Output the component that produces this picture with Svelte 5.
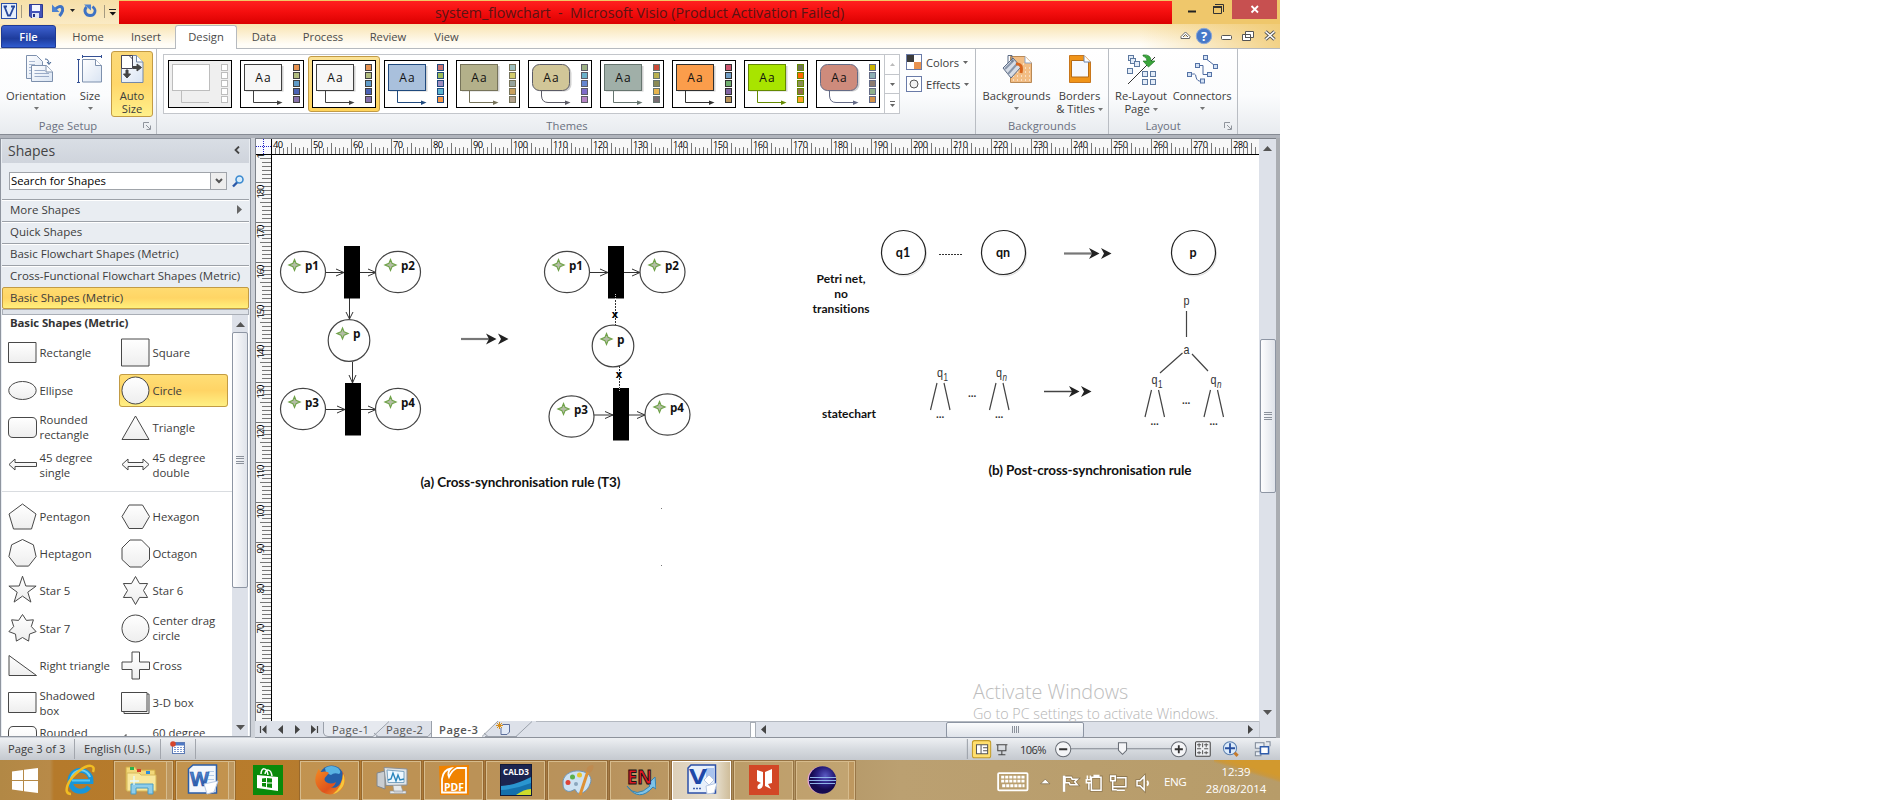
<script>
  const tabs = [
    ['Home', 58], ['Insert', 58], ['Design', 62], ['Data', 54],
    ['Process', 64], ['Review', 66], ['View', 51]
  ];

  const std = ['#e8924f', '#b1bd7f', '#5f9bc8', '#4a62b4', '#8570ab'];
  const themes = [
    { none: true, fill: '#fff', line: '#bdbdbd', sw: ['#fff', '#fff', '#fff', '#fff', '#fff'] },
    { fill: '#f7f7f7', line: '#404040', sw: std },
    { fill: '#f7f7f7', line: '#404040', sw: std, on: true },
    { fill: '#a9c0dc', line: '#1f497d', sw: ['#c9706f', '#9bbb59', '#9d8cbf', '#5bb4cf', '#f79646'] },
    { fill: '#b3b08a', line: '#76735a', sw: ['#9cbebd', '#d2cb6c', '#95a39d', '#c89f5d', '#b1a089'] },
    { fill: '#d1c698', line: '#5b5b66', sw: ['#9cb084', '#6bb1c9', '#6585cf', '#7e6bc9', '#b583c3'], r: 7 },
    { fill: '#a0afa8', line: '#66756f', sw: ['#cc4b38', '#b8b04e', '#8a8a55', '#e8b54d', '#786c71'] },
    { fill: '#fb9d4b', line: '#30302f', sw: ['#ce5570', '#6f9dc4', '#6fae6f', '#8064a2', '#b8935a'] },
    { fill: '#a8e400', line: '#648a00', sw: ['#6e7057', '#ff6700', '#8b8d55', '#916b4c', '#ff9f25'] },
    { fill: '#ce8b7c', line: '#646b86', sw: ['#ccb400', '#8caeb2', '#8c7b70', '#8fb08c', '#d19049'], r: 7 }
  ];

  const stencils = ['Quick Shapes', 'Basic Flowchart Shapes (Metric)', 'Cross-Functional Flowchart Shapes (Metric)'];

  const poly = (n, r = 14, a0 = -90, inner = 0) => {
    const pts = [];
    const k = inner ? n * 2 : n;
    for (let i = 0; i < k; i++) {
      const a = ((a0 + (360 / k) * i) * Math.PI) / 180;
      const q = inner && i % 2 ? inner : r;
      pts.push(`${(14.5 + q * Math.cos(a)).toFixed(1)},${(14.5 + q * Math.sin(a)).toFixed(1)}`);
    }
    return `M${pts.join('L')}Z`;
  };
  const box = 'M.5 4.5H28V24.5H.5Z';
  const rbox = 'M5 4.5H24Q28.5 4.5 28.5 9V20Q28.5 24.5 24 24.5H5Q.5 24.5 .5 20V9Q.5 4.5 5 4.5Z';
  const circ = 'M14.5 1A13.5 13.5 0 1 1 14.4 1Z';
  const groupA = [
    ['Rectangle', box], ['Square', 'M.5 1H28V28H.5Z'],
    ['Ellipse', 'M14.5 5.5A13.7 9 0 1 1 14.4 5.5Z'], ['Circle', circ],
    ['Rounded\nrectangle', rbox], ['Triangle', 'M14.5 3L28 26.5H1Z'],
    ['45 degree\nsingle', 'M1 14.5L7 9V12.5H28.5V16.5H7V20Z'],
    ['45 degree\ndouble', 'M1 14.5L7 9V12.5H22V9L28 14.5L22 20V16.5H7V20Z']
  ];
  const groupB = [
    ['Pentagon', 'M14.5 2L28 12L23.5 27H5.5L1 12Z'], ['Hexagon', 'M1 14.5L8 3H21.5L28.5 14.5L21.5 26.5H8Z'],
    ['Heptagon', poly(7)], ['Octagon', 'M9 1H20.5L28.5 9V20.5L20.5 28H9L1 20.5V9Z'],
    ['Star 5', poly(5, 14.3, -90, 5.6)], ['Star 6', poly(6, 14, -90, 8)],
    ['Star 7', poly(7, 14, -90, 9)], ['Center drag\ncircle', circ],
    ['Right triangle', 'M1 4.5V24.5H28.5Z'],
    ['Cross', 'M11 1H18.5V11H28.5V18.5H18.5V28H11V18.5H1V11H11Z'],
    ['Shadowed\nbox', box], ['3-D box', 'M.5 4.5H26V23.5H.5Z M26 6H28V25.5H3V23.5'],
    ['Rounded\n ', 'M5 .5H24Q28.500 .5 28.500 6V28H.5V6Q.5 .5 5 .5Z'], ['60 degree\n ', 'M1 13L5 8.500V13']
  ];

  const hTicks = Array.from({ length: 247 }, (_, i) => i);
  const hLabels = Array.from({ length: 25 }, (_, i) => i);
  const vTicks = Array.from({ length: 142 }, (_, i) => i);
  const vLabels = Array.from({ length: 15 }, (_, i) => i);

  const places = [
    [303, 272, 22.5, 20.7, 'p1', 305, 270], [398, 272, 22.5, 20.7, 'p2', 401, 270],
    [349, 340.5, 20.8, 20.8, 'p', 353, 338.5],
    [303, 409, 22.5, 20.7, 'p3', 305, 407], [398, 409, 22.5, 20.7, 'p4', 401, 407],
    [567, 272, 22.5, 20.7, 'p1', 569, 270], [662.5, 272, 22.5, 20.7, 'p2', 665, 270],
    [613, 346, 20.8, 20.8, 'p', 617, 344],
    [571.5, 416.5, 22.5, 20.7, 'p3', 574, 414], [667.5, 414.5, 22.5, 20.7, 'p4', 670, 412]
  ];
  const bars = [[344, 246], [345, 383], [608, 246], [613, 388]];
  const hArrows = [
    [326, 344, 272.5], [360, 376, 272.5], [326, 345, 409.5], [361, 376, 409.5],
    [590, 608, 272.5], [624, 640, 272.5], [594, 613, 415], [629, 645, 415]
  ];
  const rewrites = [[461, 339], [1064, 253.5], [1044, 391.5]];
  const forks = [[938, 383], [997, 383], [1152.5, 390], [1211.5, 390]];
</script>

{#snippet caret()}<svg class="caret" width="5" height="3" viewBox="0 0 5 3"><path d="M0 0H5L2.5 3Z" fill="#666" /></svg>{/snippet}
{#snippet launcher()}<svg class="launch" width="8" height="8" viewBox="0 0 8 8"><path d="M.5 6V.5H6M3 3L7 7M7.5 3.5V7.5H3.5" fill="none" stroke="#8f949c" /></svg>{/snippet}
{#snippet shapeGrid(list)}
  <div class="grid">
    {#each list as [name, d]}
      <div class="shape" class:hot={name === 'Circle'}>
        <svg width="29" height="29" viewBox="0 0 29 29"><path {d} fill="url(#shapeFill)" stroke="#484848" /></svg>
        <span>{name}</span>
      </div>
    {/each}
  </div>
{/snippet}

<div class="window">
  <svg class="defs" width="0" height="0">
    <defs>
      <linearGradient id="shapeFill" x1="0" y1="0" x2="0" y2="1"><stop offset="0" stop-color="#fff" /><stop offset="1" stop-color="#eee" /></linearGradient>
      <linearGradient id="page" x1="0" y1="0" x2="1" y2="1"><stop offset="0" stop-color="#fff" /><stop offset="1" stop-color="#d9e4f3" /></linearGradient>
      <linearGradient id="blue" x1="0" y1="0" x2="0" y2="1"><stop offset="0" stop-color="#5f9be0" /><stop offset="1" stop-color="#1d4c9f" /></linearGradient>
      <linearGradient id="fox" x1="0" y1="0" x2="1" y2="1"><stop offset="0" stop-color="#f28a22" /><stop offset=".6" stop-color="#e0531c" /><stop offset="1" stop-color="#f0a02a" /></linearGradient>
      <radialGradient id="orb" cx=".6" cy=".35"><stop offset="0" stop-color="#5b5bc4" /><stop offset=".6" stop-color="#2a2080" /><stop offset="1" stop-color="#150a50" /></radialGradient>
    </defs>
  </svg>

  <header class="titlebar">
    <svg class="quick" width="119" height="24" viewBox="0 0 119 24">
      <rect x="1.5" y="3.5" width="15" height="15" fill="#e6effb" stroke="#2a4fa8" />
      <path d="M4.500 6.500L8 15.500H10L14 6.500M3.500 6.500H7M11 6.500H15" fill="none" stroke="#27489c" stroke-width="1.800" />
      <path d="M21.500 5V18M104.500 5V18" stroke="#a59a80" />
      <path d="M29.500 4.500H42.500V17.500H31L29.500 16Z" fill="#4353b8" stroke="#2d3990" />
      <rect x="32" y="5" width="8" height="6" fill="#f4f6ff" /><rect x="32" y="13" width="7" height="5" fill="#dfe3f5" /><rect x="33" y="14" width="2" height="3" fill="#222f7d" />
      <path d="M55 9.500C61 3 66 8 59.500 16" fill="none" stroke="#3e72c4" stroke-width="3" /><path d="M52 4.500V12H59.500Z" fill="#4d82d0" />
      <path d="M70 9H75L72.500 12Z" fill="#222" />
      <path d="M86.500 7C83 11 86 15.500 90 15.500C95 15.500 97 10 92.500 6.500" fill="none" stroke="#3e72c4" stroke-width="2.800" /><path d="M84 4.500H91V10.500Z" fill="#4d82d0" />
      <path d="M109 9.500H116" stroke="#222" /><path d="M109.500 12H116L112.800 15.500Z" fill="#111" />
    </svg>
    <div class="red"><span>system_flowchart&nbsp; -&nbsp; Microsoft Visio (Product Activation Failed)</span></div>
    <svg class="winbtn" width="108" height="24" viewBox="0 0 108 24">
      <path d="M16 11.500H24" stroke="#222" stroke-width="2" />
      <path d="M41.500 6.500H49.500V13.500H41.500ZM43 4.500H51.500V12" fill="none" stroke="#333" /><path d="M41 7H50" stroke="#333" stroke-width="2" />
      <rect x="60" y="0" width="45" height="19" fill="#c75050" />
      <path d="M79.500 6L86 12.500M86 6L79.500 12.500" stroke="#fff" stroke-width="1.800" />
    </svg>
  </header>

  <nav class="tabs">
    <div class="file">File</div>
    {#each tabs as [name, w]}
      <div class="tab" class:active={name === 'Design'} style:width="{w}px">{name}</div>
    {/each}
    <svg class="tabtools" width="104" height="24" viewBox="0 0 104 24">
      <path d="M5 14.500H13.500L14 12.500L9.500 8L5 12.500ZM7 13L9.500 10.500L12 13" fill="#fff" stroke="#666" />
      <circle cx="28" cy="12" r="7.700" fill="#4678c8" stroke="#8aa8d8" />
      <text x="28" y="17" text-anchor="middle" font-size="13" font-weight="700" fill="#fff">?</text>
      <rect x="45.500" y="11.500" width="10" height="4" rx="1" fill="#fff" stroke="#555" />
      <path d="M69.500 7.500H77.500V13.500H69.500ZM66.500 10.500H74.500V16.500H66.500Z" fill="#fff" stroke="#555" /><path d="M69 13.500H72" stroke="#555" />
      <path d="M89.500 7.500L98.500 15.500M98.500 7.500L89.500 15.500" stroke="#555" stroke-width="3.500" /><path d="M89.500 7.500L98.500 15.500M98.500 7.500L89.500 15.500" stroke="#fff" stroke-width="1.500" />
    </svg>
  </nav>

  <section class="ribbon">
    <div class="group setup">
      <div class="tools">
        <div class="tool orient">
          <svg width="34" height="30" viewBox="0 0 34 30">
            <path d="M7.500 1.500H17.500L23.500 7.500V24.500H7.500Z" fill="url(#page)" stroke="#7d90ad" /><path d="M10 7.500H16M10 10.500H16M10 13.500H16M10 16.500H16M10 19.500H16" stroke="#a9b9d2" />
            <path d="M12.500 11.500H27.500L33.500 18V27.500H12.500Z" fill="url(#page)" stroke="#7d90ad" /><path d="M15.500 16.500H26M15.500 19.500H30M15.500 22.500H30" stroke="#9aabc8" /><path d="M27 11.500V18H33.500" fill="#fff" stroke="#7d90ad" /><path d="M26 5Q30 5 30 10M28 8L30 10.500L32 8" fill="none" stroke="#3e608f" />
          </svg>
          <span>Orientation</span>{@render caret()}
        </div>
        <div class="tool size">
          <svg width="30" height="30" viewBox="0 0 30 30">
            <path d="M7.500 5.500H20.500L26.500 11.500V28H7.500Z" fill="url(#page)" stroke="#7d90ad" /><path d="M20.500 5.500V11.500H26.500" fill="#fff" stroke="#7d90ad" />
            <path d="M7 2.500H26M7.500 1V4M26.500 1V4M3.500 5V28M2 5.500H5M2 28.500H5" stroke="#334f93" />
          </svg>
          <span>Size</span>{@render caret()}
        </div>
        <div class="tool auto">
          <svg width="30" height="30" viewBox="0 0 30 30">
            <path d="M4.500 1.500H19.500L26 8V28.500H4.500Z" fill="url(#page)" stroke="#7488a8" /><path d="M19.500 1.500V8H26" fill="#fff" stroke="#7488a8" />
            <path d="M4.500 1.500H15.500V14.500H4.500Z" fill="#fff" stroke="#445" /><path d="M12 1.500L15.500 5" stroke="#445" />
            <path d="M16 12.500H20V10L24.500 13.500L20 17V14.500H16ZM9 16V20H6.500L10 24L13.500 20H11V16Z" fill="#444" stroke="#444" />
          </svg>
          <span>Auto<br />Size</span>
        </div>
      </div>
      <div class="caption">Page Setup{@render launcher()}</div>
    </div>

    <div class="group themes">
      <div class="themerow">
        <div class="gallery">
          {#each themes as t}
            <div class="thumb" class:on={t.on}>
              <svg width="64" height="48" viewBox="0 0 64 48">
                <rect x=".5" y=".5" width="63" height="47" fill={t.none ? '#efefef' : '#fff'} stroke="#000" />
                {#if !t.none}<rect x="6" y="6" width="37.500" height="25.500" rx={t.r ?? 0} fill="#999" opacity=".45" />{/if}
                <rect x="4.500" y="4.500" width="37" height="26" rx={t.r ?? 0} fill={t.fill} stroke={t.line} />
                <path d={t.r ? 'M13.500 31V36Q14 42.500 20 42.500H41' : 'M13.500 31V42.500H41'} fill="none" stroke={t.line} />
                {#if !t.none}
                  <path d="M37 40.500L42.500 42.500L37 45Z" fill={t.line} />
                  <text class="aa" x="23" y="22" text-anchor="middle" textLength="15.500">Aa</text>
                {/if}
                {#each t.sw as c, i}<rect x="53.500" y={4.5 + i * 8} width="6" height="6" fill={c} stroke={t.line} />{/each}
              </svg>
            </div>
          {/each}
          <div class="spin">
            <i><svg width="5" height="3"><path d="M0 3H5L2.500 0Z" fill="#bbb" /></svg></i>
            <i><svg width="5" height="3"><path d="M0 0H5L2.500 3Z" fill="#666" /></svg></i>
            <i><svg width="5" height="6"><path d="M0 .500H5" stroke="#666" /><path d="M0 3H5L2.500 6Z" fill="#666" /></svg></i>
          </div>
        </div>
        <div class="opts">
          <div><svg width="16" height="16"><rect x=".5" y=".5" width="15" height="15" fill="#fff" stroke="#6a7ba8" /><rect x="1" y="1" width="7" height="7" fill="#3b3b3b" /><rect x="8" y="8" width="7" height="7" fill="#e8924f" /></svg>Colors{@render caret()}</div>
          <div><svg width="16" height="16"><rect x=".5" y=".5" width="15" height="15" fill="#fff" stroke="#6a7ba8" /><circle cx="8" cy="8" r="4" fill="#f2f2f2" stroke="#555" /></svg>Effects{@render caret()}</div>
        </div>
      </div>
      <div class="caption">Themes</div>
    </div>

    <div class="group bgs">
      <div class="tools">
        <div class="tool backs">
          <svg width="32" height="30" viewBox="0 0 32 30">
            <path d="M9.500 2.500H24L30.500 9V28.500H9.500Z" fill="#f2bd84" stroke="#b98955" /><path d="M12 14H29M12 18H29M12 22H29M12 26H29M14 10H26" stroke="#fff" stroke-dasharray="1 3" /><path d="M24 2.500V9H30.500" fill="#fff" stroke="#8fa3c2" />
            <path d="M2 14L12 4L20 13L10 24Z" fill="#d6dce6" stroke="#5a6a84" /><path d="M4 15L13 6M7 20L16 10" stroke="#8996ab" stroke-width="2" /><path d="M7 9V1.500H11V8" fill="none" stroke="#5a6a84" /><path d="M15 10Q22 9 20 19" fill="none" stroke="#d8641c" stroke-width="3" />
          </svg>
          <span>Backgrounds</span>{@render caret()}
        </div>
        <div class="tool borders">
          <svg width="26" height="30" viewBox="0 0 26 30">
            <path d="M2.500 1.500H17L23.500 8V28.500H2.500Z" fill="#f09418" stroke="#c8761b" /><path d="M4.500 6.500H21.500V23H4.500Z" fill="#f7f9fd" stroke="#b56a14" /><path d="M17 1.500V8H23.500" fill="#fff" stroke="#6983ae" />
          </svg>
          <span>Borders<br />&amp; Titles {@render caret()}</span>
        </div>
      </div>
      <div class="caption">Backgrounds</div>
    </div>

    <div class="group layout">
      <div class="tools">
        <div class="tool relay">
          <svg width="32" height="32" viewBox="0 0 32 32">
            <g fill="#e3ecf8" stroke="#5c789f"><rect x="3.500" y="1.500" width="5" height="5" /><rect x="5.500" y="4.500" width="5" height="5" /><rect x="9.500" y="7.500" width="5" height="5" /><rect x="2.500" y="14.500" width="5" height="5" /><rect x="17.500" y="17.500" width="5" height="5" /><rect x="25.500" y="17.500" width="5" height="5" /><rect x="17.500" y="25.500" width="5" height="5" /><rect x="25.500" y="25.500" width="5" height="5" /></g>
            <path d="M3 30L30 3" stroke="#333" /><path d="M18 1Q26 0 26 7H30L23.500 13L18 7H22Q22 3 18 2Z" fill="#3aa53a" stroke="#1f7a26" stroke-width=".7" />
          </svg>
          <span>Re-Layout<br />Page {@render caret()}</span>
        </div>
        <div class="tool conn">
          <svg width="34" height="30" viewBox="0 0 34 30">
            <path d="M20 4L29 11M12 11.500H18V20.500H24M5 21Q11 18 11 23Q12 28 17 27" fill="none" stroke="#4d6aa0" />
            <g fill="#d4e2f5" stroke="#5573a6"><rect x="18.500" y="1.500" width="4" height="4" /><rect x="28.500" y="10.500" width="4" height="4" /><rect x="10.500" y="9.500" width="4" height="4" /><rect x="22.500" y="18.500" width="4" height="4" /><rect x="2.500" y="18.500" width="4" height="4" /><rect x="15.500" y="25" width="4" height="4" /></g>
          </svg>
          <span>Connectors</span>{@render caret()}
        </div>
      </div>
      <div class="caption">Layout{@render launcher()}</div>
    </div>
  </section>

  <main class="work">
    <aside class="panel">
      <div class="phead"><span>Shapes</span><svg width="6" height="8"><path d="M5 .5L1.500 4L5 7.500" fill="none" stroke="#444" stroke-width="1.800" /></svg></div>
      <div class="search">
        <div class="field"><span>Search for Shapes</span><i><svg width="8" height="6"><path d="M1 1L4 4L7 1" fill="none" stroke="#555" stroke-width="2" /></svg></i></div>
        <svg width="12" height="13" viewBox="0 0 12 13"><circle cx="7.500" cy="4.500" r="3.500" fill="#d8ecfb" stroke="#3d8bd0" stroke-width="1.600" /><path d="M5 7.500L1 11.500" stroke="#2a58a8" stroke-width="2.400" /></svg>
      </div>
      <div class="row">More Shapes<svg width="5" height="9"><path d="M0 0V9L5 4.500Z" fill="#666" /></svg></div>
      {#each stencils as s}<div class="row">{s}</div>{/each}
      <div class="row sel">Basic Shapes (Metric)</div>
      <div class="splitter"></div>
      <div class="stencil">
        <div class="list">
          <h3>Basic Shapes (Metric)</h3>
          {@render shapeGrid(groupA)}
          <hr />
          {@render shapeGrid(groupB)}
        </div>
        <div class="vbar left">
          <svg width="9" height="5"><path d="M0 5H9L4.500 0Z" fill="#555" /></svg>
          <div class="thumbbar"><b></b></div>
          <svg width="9" height="5"><path d="M0 0H9L4.500 5Z" fill="#555" /></svg>
        </div>
      </div>
    </aside>

    <div class="doc">
      <div class="drawing">
        <svg width="1004" height="582" viewBox="255 139 1004 582">
          <rect x="255" y="139" width="1004" height="582" fill="#fff" />
          <rect x="272" y="139" width="987" height="15" fill="#f7f7f7" />
          {#each hTicks as i}
            <rect x={271 + i * 4} y={i % 10 === 0 ? 139 : i % 5 === 0 ? 143 : i % 2 ? 148 : 147} width="1" height={i % 10 === 0 ? 15 : i % 5 === 0 ? 11 : i % 2 ? 6 : 7} fill="#777" />
          {/each}
          {#each hLabels as i}<text class="rl" x={273 + i * 40} y="147.500" textLength={i < 6 ? 10 : 15}>{40 + i * 10}</text>{/each}
          <rect x="256" y="155" width="15" height="566" fill="#f7f7f7" />
          {#each vTicks as i}
            <rect x={i % 10 === 4 ? 256 : i % 10 === 9 ? 260 : 262} y={158 + i * 4 + 8} width={i % 10 === 4 ? 15 : i % 10 === 9 ? 11 : 9} height="1" fill="#777" />
          {/each}
          <rect x="260" y="158" width="11" height="1" fill="#777" /><rect x="262" y="162" width="9" height="1" fill="#777" />
          {#each vLabels as i}<text class="rl" transform="translate(264 {(i < 10 ? 158.5 : 153.5) + i * 40}) rotate(-90)" textLength={i < 10 ? 14 : 10}>{190 - i * 10}</text>{/each}
          <rect x="256" y="139" width="15" height="15" fill="#fafaff" /><path d="M256 146.500H271M263.500 139V154" stroke="#2222cc" stroke-dasharray="1 1" />
          <path d="M271.500 139V721M256 154.500H1259" stroke="#000" />
          <path d="M255.500 139V721" stroke="#7d828a" />

          <g fill="none" stroke="#333">
            {#each hArrows as [a, b, y]}<path d="M{a} {y}H{b}M{b - 8} {y - 3.5}L{b} {y}L{b - 8} {y + 3.5}" />{/each}
            <path d="M349.500 298V319M346 312L349.500 319L353 312M352.500 362V383M349 375L352.500 383L356 375" />
            <path d="M615.500 294V325M619.500 366V392" stroke-dasharray="2 1" />
          </g>
          {#each bars as [x, y]}<rect {x} {y} width="16" height="52.500" fill="#000" />{/each}
          <path d="M615.500 294V299M619.500 388V392" stroke="#ccc" stroke-dasharray="1 1" />
          {#each places as [cx, cy, rx, ry, label, tx, ty]}
            <ellipse {cx} {cy} {rx} {ry} fill="#fff" stroke="#444" stroke-width="1.200" />
            <path d="M{tx - 10.500} {ty - 10.500}l1.600 3.900l3.900 1.600l-3.900 1.600l-1.600 3.900l-1.600 -3.900l-3.900 -1.600l3.900 -1.600Z" fill="#b4bda6" stroke="#70a34a" stroke-width="1.200" />
            <text class="pl" x={tx} y={ty - 0.5} textLength={label.length > 1 ? 14 : 7.5} lengthAdjust="spacingAndGlyphs">{label}</text>
          {/each}
          <text class="xx" x="615" y="318">x</text><text class="xx" x="619" y="378">x</text>

          {#each rewrites as [x, y], i}
            <path d="M{x} {y}H{x + 28}" stroke={i === 2 ? '#444' : '#777'} stroke-width={i === 2 ? 1.5 : 2.2} />
            <path d="M{x + 25} {y - 5.5}L{x + 35.500} {y}L{x + 25} {y + 5.5}L{x + 28} {y}ZM{x + 37} {y - 5.5}L{x + 47.500} {y}L{x + 37} {y + 5.5}L{x + 40} {y}Z" fill="#222" />
          {/each}

          {#each [[903.500, 'q1'], [1003.500, 'qn'], [1193.500, 'p']] as [x, l]}
            <circle cx={x + 1} cy="254" r="22" fill="none" stroke="#ddd" />
            <circle cx={x} cy="252.500" r="22" fill="#fff" stroke="#222" stroke-width="1.200" />
            <text class="cb" x={x - 0.5} y="256.500" font-size="12.500">{l}</text>
          {/each}
          <path d="M939 254.500H963" stroke="#333" stroke-dasharray="2 1" />

          <text class="cb" x="841" y="282.500" font-size="12" textLength="49">Petri net,</text>
          <text class="cb" x="841" y="298" font-size="12">no</text>
          <text class="cb" x="841" y="313" font-size="12" textLength="57">transitions</text>
          <text class="cb" x="849" y="418" font-size="12" textLength="54">statechart</text>
          <text class="cb" x="520.500" y="487" font-size="13.500" textLength="200">(a) Cross-synchronisation rule (T3)</text>
          <text class="cb" x="1090" y="474.500" font-size="13.500" textLength="203">(b) Post-cross-synchronisation rule</text>

          <g stroke="#444" fill="none" stroke-width="1.200">
            <path d="M1186.500 311V337M1182.500 353L1160 373M1192 354L1208 371" />
            {#each forks as [x, y]}<path d="M{x - 1} {y}L{x - 7.500} {y + 27}M{x + 6} {y}L{x + 12} {y + 27}" />{/each}
          </g>
          <g class="tree">
            <text x="1183.500" y="304.500" textLength="6" lengthAdjust="spacingAndGlyphs">p</text>
            <text x="1183.500" y="353.500" textLength="6" lengthAdjust="spacingAndGlyphs">a</text>
            {#each forks as [x, y], i}
              <text x={x - 1} y={y - 6.5} textLength="6" lengthAdjust="spacingAndGlyphs">q</text>
              <text x={x + 5.5} y={y - 2} font-size="10" textLength="4.500" lengthAdjust="spacingAndGlyphs" font-style={i % 2 ? 'italic' : 'normal'}>{i % 2 ? 'n' : '1'}</text>
              <text class="dots" x={x - 2} y={y + 35}>...</text>
            {/each}
            <text class="dots" x="968" y="397">...</text><text class="dots" x="1182" y="404">...</text>
          </g>
          <path d="M661 508.500H662M661 565.500H662" stroke="#777" />
        </svg>
        <div class="vbar right">
          <svg width="9" height="5"><path d="M0 5H9L4.500 0Z" fill="#555" /></svg>
          <div class="thumbbar"><b></b></div>
          <svg width="9" height="5"><path d="M0 0H9L4.500 5Z" fill="#555" /></svg>
        </div>
      </div>
      <div class="hrow">
        <svg width="281" height="17" viewBox="255 721 281 17">
          <path d="M323 721V735Q324 737 328 737H374L390 721Z" fill="#e6e9ef" />
          <path d="M323.500 722V733Q324 736.500 328 736.500H373L389 721.500M376 736.500H428L431 733M374 733L378 736.500M485 736.500H516L532 721.500" fill="none" stroke="#9aa0aa" />
          <path d="M431.500 721V737H482L498 721Z" fill="#fff" /><path d="M431.500 721V737M482 736.500L498 721M484 733L488 736.500H517" fill="none" stroke="#9aa0aa" />
          <path d="M260.500 726V733M317.500 726V733" stroke="#444" stroke-width="1.200" /><path d="M266.500 725V734L262 729.500ZM283 725V734L278 729.500ZM295 725V734L300 729.500ZM311 725V734L316 729.500Z" fill="#444" />
          <text x="332" y="734" textLength="37">Page-1</text><text x="386" y="734" textLength="37">Page-2</text><text x="439" y="734" font-weight="600" textLength="39">Page-3</text>
          <path d="M502.500 724.500H509.500V732L507 734.500H501V728" fill="#e2eaf7" stroke="#5d6f9b" /><path d="M499.500 722V729M496 725.500H503M497 723L502 728M502 723L497 728" stroke="#d78f1b" />
        </svg>
        <div class="hbar">
          <span class="grip"></span>
          <svg class="la" width="5" height="9"><path d="M5 0V9L0 4.500Z" fill="#444" /></svg>
          <div class="hthumb"></div>
          <svg class="ra" width="5" height="9"><path d="M0 0V9L5 4.500Z" fill="#444" /></svg>
        </div>
        <div class="corner"></div>
      </div>
    </div>
    <div class="edge"></div>
    <div class="watermark"><p>Activate Windows</p><small>Go to PC settings to activate Windows.</small></div>
  </main>

  <footer class="status">
    <span class="s1">Page 3 of 3</span><span class="s2">English (U.S.)</span>
    <span class="s3"><svg width="16" height="14"><rect x="2.500" y="1.500" width="12" height="11" fill="#fff" stroke="#5d7bb5" /><rect x="3" y="2" width="11" height="2.500" fill="#4d78c4" /><path d="M4 6.500H14M4 8.500H14M4 10.500H14" stroke="#7f9bd0" stroke-dasharray="2 1" /><circle cx="3" cy="3" r="2.800" fill="#d5452b" /></svg></span>
    <svg class="zoom" width="317" height="20" viewBox="960.2 738.9 312.6 19.72">
      <path d="M964.500 738V760" stroke="#9aa0a8" /><rect x="969.500" y="740.500" width="18" height="17" rx="2" fill="#ffdf6e" stroke="#c29b29" />
      <path d="M973.500 744.500H984.500V753.500H973.500ZM978 744V754M980 747.500H984M980 750.500H984" fill="#fff" stroke="#555" />
      <path d="M993 744.500H1004M994.500 745V750.500H1002.500V745M998.500 751V754M995 754.500H1002" fill="none" stroke="#444" />
      <text x="1016.500" y="753.500" textLength="26" fill="#333">106%</text>
      <path d="M1066 748.500H1166" stroke="#858a92" />
      <g fill="#f4f5f7" stroke="#666b73"><circle cx="1059" cy="749" r="7.500" /><circle cx="1173" cy="749" r="7.500" /><path d="M1113.500 742.500H1121.500V750L1117.500 754L1113.500 750Z" /></g>
      <path d="M1055 749H1063M1169 749H1177M1173 745V753" stroke="#333" stroke-width="1.800" />
      <rect x="1189.500" y="741.500" width="14.500" height="14.500" rx="1" fill="#eef0f3" stroke="#444" /><path d="M1196.500 743V747M1196.500 750V754M1191 748.500H1195M1198 748.500H1202M1193 743V747M1191 744.500H1195M1200 743V747M1198 744.500H1202M1193 751V754M1191 752.500H1195M1200 751V754M1198 752.500H1202" stroke="#555" />
      <circle cx="1223.500" cy="748" r="6.500" fill="#dcebfa" stroke="#5a7fae" /><path d="M1218.500 748H1228.500M1223.500 743V753" stroke="#2850a0" stroke-width="1.800" /><path d="M1228 752.500L1231 755.500" stroke="#c67a2a" stroke-width="3" />
      <path d="M1248.500 742.500H1257V748H1248.500ZM1259 741.500H1263V746M1248.500 751.500H1254V755.500H1248.500Z" fill="#e8edf4" stroke="#7c8795" /><path d="M1253.500 746.500H1261.500V753.500H1253.500Z" fill="#fff" stroke="#2f5cab" stroke-width="1.500" />
    </svg>
  </footer>

  <div class="taskbar">
    <div class="cell start"><svg width="28" height="27" viewBox="0 0 28 27"><path d="M1 4.500L12 3V13H1ZM13 2.800L27 1V13H13ZM1 14H12V24L1 22.500ZM13 14H27V26L13 24.200Z" fill="#fff" /></svg></div>
    <div class="cell ie"><svg width="32" height="32" viewBox="0 0 32 32">
      <path d="M7 17.500H26A10.500 10.500 0 1 0 24 23" fill="none" stroke="#1996d8" stroke-width="5" /><path d="M6 14Q8 7 16 6Q23 7 25 13" fill="none" stroke="#6fd0f5" stroke-width="2" /><path d="M7 16.500H25" stroke="#58c6f2" stroke-width="2" /><path d="M6 30C-3 30 3 15 14 7C23 0 31 0 28 8" fill="none" stroke="#f2bd22" stroke-width="2.500" />
    </svg></div>
    <div class="cell btn multi"><svg width="32" height="32" viewBox="0 0 32 32">
      <path d="M1 3H10L12 6H30V26H1Z" fill="#f2d879" stroke="#cda944" /><path d="M2 9H14L16 11H31V27H2Z" fill="#f8e79c" stroke="#d7b95a" /><rect x="5" y="3" width="4" height="3" fill="#2cb14c" /><rect x="12" y="5" width="4" height="3" fill="#d33d28" /><rect x="21" y="7" width="4" height="3" fill="#2c8edb" />
      <path d="M6 30V20H28V30H23V24H11V30Z" fill="#8ecdea" stroke="#4b9cc4" /><path d="M9 12V21M5 17H14" stroke="#e7faff" stroke-width="1.300" />
    </svg></div>
    <div class="cell btn multi word"><svg width="32" height="32" viewBox="0 0 32 32">
      <path d="M6 1H29.500V29H1.500V5Z" fill="#f3f7fd" stroke="#2b5ea8" stroke-width="1.500" /><path d="M21 7.500H27M21 11.500H27M21 15.500H27" stroke="#b5cbe8" /><text x="3" y="22" font-size="20" font-weight="700" fill="url(#blue)" stroke="#1d4c9f" stroke-width=".6" textLength="19" lengthAdjust="spacingAndGlyphs">W</text><path d="M17 20L31 17L27 28L20 30Z" fill="#fff" stroke="#b8c8e2" />
    </svg></div>
    <div class="cell store"><svg width="30" height="30" viewBox="0 0 30 30"><rect width="30" height="30" fill="#0a8a0a" /><path d="M4 10L25 12V26L4 23Z" fill="#fff" /><path d="M8 9C8 2 14 2 15 10M12 9C13 3 18 4 19 11" fill="none" stroke="#fff" stroke-width="1.500" /><path d="M9 13.500L13 13V17H9ZM14 13L19 13.500V17.500H14ZM9 18H13V22L9 21.300ZM14 18.500H19V23L14 22.300Z" fill="#0a8a0a" /></svg></div>
    <div class="cell btn"><svg width="32" height="32" viewBox="0 0 32 32">
      <circle cx="17.500" cy="14" r="12.500" fill="#2460a8" /><path d="M11 4Q17 0 24 4Q28 8 25 10Q20 8 17 11L12 9Z" fill="#59b3e2" /><path d="M2 11L4.500 5L7 8Q13 6.500 15 9L12 12.500Q9 15 12 18Q17 21 22 18Q20 24 16 23Q23 26 27 18Q30 11 27.500 5Q34 16 28 25Q18 34 8 28Q-1 21 2 11Z" fill="url(#fox)" /><path d="M29 9Q33 18 27 25Q23 29.500 19 30Q29 22 29 9Z" fill="#f8c63a" />
    </svg></div>
    <div class="cell btn"><svg width="32" height="32" viewBox="0 0 32 32">
      <path d="M1 9L9 7V25L1 22Z" fill="#c9cdd1" stroke="#80868c" /><path d="M8 3.500L31 5V21L10 21.500Z" fill="#dfe4e8" stroke="#8a9096" /><path d="M11 6L28 7.500V18.500L12 18.500Z" fill="#eef8ff" stroke="#7da4c0" /><path d="M12 16L15 15L17 9L20 17L22 11L24 16L28 15" fill="none" stroke="#2a86bd" stroke-width="1.400" /><path d="M17 21.500H25L27 28H18ZM14 27H30V29.500H14Z" fill="#e6e9eb" stroke="#94999e" stroke-width=".6" />
    </svg></div>
    <div class="cell btn"><svg width="32" height="32" viewBox="0 0 32 32"><path d="M1 2L31 1V31H2Z" fill="#f08300" /><path d="M4 29V15Q5 6 13 4.500Q9 8 11 13Q14 6 19 4H28V17M4 17V28.500H28V17" fill="none" stroke="#fff" stroke-width="1.800" /><text x="6" y="27" font-size="10.500" font-weight="700" fill="#fff" textLength="20" lengthAdjust="spacingAndGlyphs">PDF</text></svg></div>
    <div class="cell btn"><svg width="32" height="32" viewBox="0 0 32 32"><rect x=".5" y=".5" width="31" height="31" fill="#1c2550" stroke="#131a38" /><path d="M1 22Q16 21 31 13V22Q14 30 1 27Z" fill="#2a95cf" /><path d="M1 26Q16 25 31 19V31H1Z" fill="#1470ac" /><path d="M16 31Q24 25 31 25V31Z" fill="#cfdc2a" /><text x="3" y="11" font-size="9.500" font-weight="700" fill="#fff" textLength="26" lengthAdjust="spacingAndGlyphs">CALD3</text></svg></div>
    <div class="cell btn"><svg width="32" height="32" viewBox="0 0 32 32">
      <path d="M1 20C0 11 9 6 18 7C27 8 31 14 28 20C25 29 16 32 14 27C13 23 10 29 5 27C2 26 1 23 1 20Z" fill="#cde2f2" stroke="#6f95b5" /><circle cx="6" cy="18.500" r="2.500" fill="#dd4336" /><circle cx="10.500" cy="13" r="2.500" fill="#5bb04a" /><circle cx="17.500" cy="11" r="2.500" fill="#e8c530" /><circle cx="14" cy="20" r="2" fill="#8aa6bd" /><path d="M18 31L26 7" stroke="#dd9136" stroke-width="3" /><path d="M25 8Q23 2 31 1Q33 5 28 9Z" fill="#bf8b50" />
    </svg></div>
    <div class="cell btn"><svg width="32" height="32" viewBox="0 0 32 32"><path d="M3 22Q12 35 26 22L24 20L31 13L32 25L29 23Q15 39 3 22Z" fill="#7ec3e8" stroke="#3484b4" /><text x="3" y="19.500" font-size="19" font-weight="700" fill="#e01822" stroke="#151515" stroke-width=".9" textLength="25" lengthAdjust="spacingAndGlyphs">EN</text></svg></div>
    <div class="cell btn lit"><svg width="32" height="32" viewBox="0 0 32 32"><path d="M5 1H29.500V29H2V4Z" fill="#e8f0fb" stroke="#2b4fa8" stroke-width="1.500" /><path d="M20 4H28V16H20Z" fill="#a9c3ee" /><text x="3" y="20" font-size="21" font-weight="700" fill="#1f48a8" textLength="18" lengthAdjust="spacingAndGlyphs">V</text><path d="M23 11L28 16L23 21L18 16Z" fill="#fff" stroke="#b8c8e2" /><path d="M20 22L31 19L28 29L21 30Z" fill="#fff" stroke="#b8c8e2" /><path d="M7 24.500H16" stroke="#4564b0" stroke-width="1.500" stroke-dasharray="2 1" /></svg></div>
    <div class="cell btn"><svg width="30" height="30" viewBox="0 0 30 30"><rect width="30" height="30" fill="#d24726" /><path d="M8 5L14 7V19Q14 24 9 24Q7 20 12 18L8 16ZM16 7L23 4V18L19 19L22 24L16 21Z" fill="#fff" /></svg></div>
    <div class="cell btn multi"><svg width="30" height="30" viewBox="0 0 30 30"><circle cx="14" cy="15" r="13.500" fill="#e3a6d2" /><circle cx="15.500" cy="15" r="13.700" fill="url(#orb)" /><path d="M3 12.500H29M2 15.500H29M3 18.500H28" stroke="#8fb4e8" stroke-width="1.200" /></svg></div>
    <svg class="tray" width="203" height="40" viewBox="985 758.6 200.2 39.45">
      <g fill="none" stroke="#6b5a3c" stroke-opacity=".55" stroke-width="3"><path d="M1059 774V790M1060 775.500H1066L1067 777.500H1072L1069.500 780L1072 783H1065L1064 781H1060ZM1086 775.500H1095.500V788.500H1086ZM1081 778H1086M1083.500 781V788M1111 776H1120V785H1107M1105 774.500H1109.500V779H1105ZM1107 779V788H1119M1131 779H1134L1138 775V788L1134 784H1131Z" /></g>
      <rect x="994" y="771.500" width="29" height="17" rx="1" fill="none" stroke="#fff" stroke-width="1.800" /><path d="M997 775.500H1020M997 779.500H1020M998 784H1020" stroke="#fff" stroke-width="2.800" stroke-dasharray="3 1" />
      <path d="M1036 782H1045L1040.500 777.500Z" fill="#fff" stroke="#6b5a3c" stroke-width=".6" />
      <g fill="none" stroke="#fff" stroke-width="1.500"><path d="M1059 774V790" stroke-width="2.500" /><path d="M1060 775.500H1066L1067 777.500H1072L1069.500 780L1072 783H1065L1064 781H1060Z" /><path d="M1086 775.500H1095.500V788.500H1086ZM1088 774H1094M1081 778H1086V781H1081ZM1082 778V774M1085 778V774M1083.500 781V788" /><path d="M1111 776H1120V785H1107M1105 774.500H1109.500V779H1105ZM1107 779V788H1111M1111 788.500H1119" /><path d="M1131 779H1134L1138 775V788L1134 784H1131ZM1141 779Q1143 781.500 1141 784" /></g>
      <text x="1157.500" y="784" textLength="22.500" fill="#fff" font-size="11.500">ENG</text>
    </svg>
    <div class="clock"><span>12:39</span><span>28/08/2014</span></div>
  </div>
</div>

<style>
  :global(body) { background: #fff; }
  .window { width: 1280px; height: 800px; display: flex; flex-direction: column; font: 11.2px/15px "Open Sans", "Noto Sans", sans-serif; color: #3c3c3c; overflow: hidden; box-sizing: border-box; }
  .window :global(*) { box-sizing: border-box; }
  svg { display: block; flex: none; }
  .defs { position: absolute; }
  i { font-style: normal; }

  .titlebar { height: 24px; display: flex; background: linear-gradient(#f0c665 0 1px, #f3cb70 2px, #f8dfa0); flex: none; }
  .quick { background: linear-gradient(#f6dfa8, #faeac4); }
  .red { width: 1053px; height: 23px; margin-top: 1px; background: linear-gradient(#ff2020, #f50f0f 45%, #db0000); display: flex; padding-left: 316px; align-items: center; flex: none; }
  .red span { font-size: 14.25px; color: #5a1414; white-space: nowrap; }
  .winbtn { background: #efc76b; }

  .tabs { height: 25px; display: flex; background: linear-gradient(90deg, transparent 1140px, #efc76bcc 1280px), linear-gradient(#f9e3b0, #fffdf7 85%); border-bottom: 1px solid #b6babf; flex: none; padding-left: 1px; }
  .file { width: 55px; height: 23px; margin: 1px 3px 0 0; background: linear-gradient(#3d61d0, #1e3c9c 60%, #2f5cd0); border: 1px solid #1e3a94; border-radius: 3px 3px 0 0; color: #fff; text-align: center; line-height: 21px; font-weight: 600; font-size: 11px; }
  .tab { height: 24px; text-align: center; line-height: 24px; color: #4a4a4a; margin-top: 1px; }
  .tab.active { background: #fff; border: 1px solid #b6babf; border-bottom: 0; border-radius: 3px 3px 0 0; line-height: 22px; }
  .tabtools { margin-left: auto; }

  .ribbon { height: 86px; display: flex; background: linear-gradient(#fff, #fbfcfd 55%, #e8ebef); border-bottom: 1px solid #868b94; flex: none; }
  .group { border-right: 1px solid #b9bdc3; display: flex; flex-direction: column; justify-content: space-between; position: relative; }
  .setup { width: 157px; } .themes { width: 819px; padding-left: 6px; } .bgs { width: 133px; } .layout { width: 129px; }
  .tools { display: flex; height: 68px; }
  .tool { display: flex; flex-direction: column; align-items: center; text-align: center; line-height: 13px; padding-top: 5px; white-space: nowrap; }
  .tool > svg:first-child { margin-bottom: 5px; }
  .tool > .caret { margin-top: 5px; }
  .tool .caret { opacity: .9; }
  span .caret { display: inline-block; vertical-align: 2px; }
  .orient { width: 72px; } .size { width: 36px; margin-right: 3px; }
  .auto { width: 42px; height: 66px; margin-top: 2px; padding-top: 2px; background: linear-gradient(#fbd978, #ffd76b 50%, #fff08a); border: 1px solid #c29b45; border-radius: 3px; }
  .auto > svg:first-child { margin-bottom: 5px; }
  .backs { width: 81px; } .borders { width: 45px; }
  .relay { width: 64px; } .conn { width: 58px; } .relay > svg:first-child { margin-bottom: 3px; }
  .conn span { letter-spacing: -.1px; }
  .caption { height: 17px; text-align: center; color: #6a7080; line-height: 17px; padding-right: 20px; }
  .themes .caption { padding-right: 4px; } .bgs .caption { padding-right: 0; }
  .layout .caption { padding-right: 20px; }
  :global(.launch) { position: absolute; right: 5px; bottom: 4px; }
  .themerow { display: flex; padding-top: 5px; }
  .gallery { width: 737px; height: 60px; border: 1px solid #c3c6cb; background: #fff; display: flex; align-items: center; }
  .thumb { width: 72px; height: 56px; padding: 4px; border-radius: 3px; flex: none; }
  .thumb.on { background: linear-gradient(#fbe296, #ffd45c); border: 1px solid #c29b45; padding: 3px; }
  .aa { font-size: 12px; fill: #111; }
  .spin { width: 15px; height: 58px; display: flex; flex-direction: column; border-left: 1px solid #c3c6cb; margin-left: auto; }
  .spin i { flex: 1; display: flex; align-items: center; justify-content: center; border-bottom: 1px solid #c3c6cb; }
  .spin i:last-child { border-bottom: 0; }
  .opts { padding-left: 6px; display: flex; flex-direction: column; gap: 6px; }
  .opts div { display: flex; align-items: center; height: 16px; gap: 4px; padding-bottom: 0; letter-spacing: -.05px; }

  .work { height: 603px; display: flex; padding-top: 3px; background: linear-gradient(#b1b5bd 0 3px, #cdd1d8 3px); flex: none; position: relative; }
  .panel { width: 251px; height: 599px; border: 1px solid #8f959f; background: #e9edf2; padding: 0 1px; display: flex; flex-direction: column; overflow: hidden; }
  .phead { height: 24px; background: linear-gradient(#d9dee5, #cfd4dc); display: flex; align-items: center; justify-content: space-between; padding: 0 9px 2px 6px; font-size: 14px; color: #444; flex: none; }
  .search { height: 36px; display: flex; align-items: center; padding: 0 5px 0 7px; gap: 5px; flex: none; }
  .field { width: 218px; height: 18px; border: 1px solid #a0a4aa; background: #fff; color: #000; display: flex; justify-content: space-between; padding-left: 1px; font-size: 11.3px; }
  .field i { width: 17px; border: 1px solid #a0a4aa; margin: -1px; height: 18px; background: #eee; display: flex; align-items: center; justify-content: center; }
  .row { height: 22px; border-top: 1px solid #9ca1a8; box-shadow: inset 0 1px #fff; padding: 0 7px 2px 8px; line-height: 18px; display: flex; align-items: center; justify-content: space-between; flex: none; white-space: nowrap; font-size: 11.5px; }
  .row.sel { border: 1px solid #c29b45; border-radius: 2px; background: linear-gradient(#ffdb70, #ffd565 50%, #fff07c); padding: 0 7px; box-shadow: none; }
  .splitter { height: 6px; border: 1px solid #a9aeb6; background: #dfe3e9; flex: none; }
  .stencil { flex: 1; display: flex; background: #fff; overflow: hidden; min-height: 0; }
  .list { width: 230px; overflow: hidden; }
  .list h3 { margin: 0; font-size: 11.4px; font-weight: 700; line-height: 16px; height: 19px; padding-left: 8px; color: #333; letter-spacing: -.1px; }
  .list hr { margin: 8px 0 5px; border: 0; height: 1px; background: #d9dce0; }
  .grid { display: grid; grid-template-columns: 113px 110px; grid-auto-rows: 37.35px; padding-left: 4px; align-items: center; }
  .shape { display: flex; align-items: center; gap: 3px; line-height: 15px; white-space: pre; height: 33px; padding-left: 1.500px; font-size: 11.4px; }
  .shape.hot { background: linear-gradient(#ffdf77, #ffd465 50%, #fff286); border-radius: 3px; outline: 1px solid #c29b45; outline-offset: -1px; width: 109px; }
  .vbar { width: 17px; background: #dde1e9; display: flex; flex-direction: column; align-items: center; }
  .left { width: 16px; }
  .vbar .thumbbar { width: 16px; border: 1px solid #8d95a3; border-radius: 2px; background: linear-gradient(90deg, #fdfdfe, #dfe3ea); display: flex; align-items: center; justify-content: center; }
  .thumbbar b { width: 8px; height: 8px; background: repeating-linear-gradient(#8b919b 0 1px, transparent 1px 2.300px); }
  .left > svg:first-child { margin: 7px 0 5px; } .left .thumbbar { height: 256px; } .left > svg:last-child { margin-top: auto; margin-bottom: 6px; }
  .right > svg:first-child { margin: 7px 0 188px; } .right .thumbbar { height: 154px; } .right > svg:last-child { margin-top: auto; margin-bottom: 6px; }

  .doc { width: 1021px; margin-left: 4px; display: flex; flex-direction: column; }
  .drawing { height: 583px; display: flex; border-top: 1px solid #7d828a; }
  .right { height: 582px; }
  .rl { font-size: 9.4px; font-weight: 500; fill: #000; }
  .pl { font-size: 12.6px; font-weight: 700; fill: #111; }
  .xx { font-size: 11px; font-weight: 700; text-anchor: middle; fill: #000; }
  .cb { font-family: Lato, sans-serif; font-weight: 700; text-anchor: middle; fill: #111; font-variant-ligatures: none; }
  .tree { font-family: "Liberation Sans", Arial, sans-serif; font-size: 13.5px; fill: #333; }
  .tree .dots { font-size: 10px; font-weight: 700; }
  .hrow { height: 17px; display: flex; background: #dde1e9; border-bottom: 1px solid #8d929b; }
  .hrow text { font-size: 11.200px; fill: #555; }
  .hbar { width: 723px; display: flex; align-items: center; border-top: 1px solid #b3b8c0; flex: none; }
  .grip { margin-left: 214px; width: 6px; height: 16px; border: 1px solid #a8adb5; background: #fff; }
  .la { margin-left: 5px; }
  .hthumb { margin-left: 180px; width: 138px; height: 16px; border: 1px solid #8d95a3; border-radius: 2px; background: repeating-linear-gradient(90deg, #8b919b 0 1px, transparent 1px 2px) center / 7px 7px no-repeat, linear-gradient(#fafbfc, #dfe3ea); }
  .ra { margin-left: 164px; }
  .corner { flex: 1; background: #dde1e9; border-left: 1px solid #c5c9d1; }
  .edge { width: 4px; background: #aaadb2; }
  .watermark { position: absolute; left: 973px; top: 544px; color: #bdbdbd; white-space: nowrap; }
  .watermark p { margin: 0; font-size: 19.800px; line-height: 25px; font-weight: 300; }
  .watermark small { display: block; font-size: 14.300px; line-height: 20px; font-weight: 300; color: #b4b4b4; }

  .status { height: 22px; background: linear-gradient(#eef0f3, #d7dbe0 50%, #c5c9cf); display: flex; align-items: center; flex: none; }
  .status span { height: 20px; line-height: 20px; border-right: 1px solid #a2a6ad; }
  .s1 { width: 75px; padding-left: 8px; } .s2 { width: 86px; padding-left: 9px; } .s3 { width: 35px; padding: 2px 0 0 9px; }
  .zoom { margin-left: auto; }
  .zoom text { font-size: 11px; }

  .taskbar { height: 40px; display: flex; align-items: center; flex: none; background: linear-gradient(197deg, #d2992e 15px, #c9983f 19px, transparent 22px) right / 66px 40px no-repeat, linear-gradient(90deg, #b28845 0, #b88a48 50px, #b57a2b 54px, #b87c2c 270px, #a9793c 480px, #a57a45 600px, #ab8c5a 730px, #bba071 900px, #b79c69 1280px); }
  .cell { width: 59px; height: 39px; margin-right: 3px; display: flex; align-items: center; justify-content: center; flex: none; }
  .btn { background: #d2b17b70; border: 1px solid #d6bb8c; outline: 1px solid #80592a88; outline-offset: 0; }
  .start { width: 50px; margin: 0; } .ie { width: 61px; }
  .multi { width: 59px; justify-content: flex-start; padding-left: 10px; box-shadow: inset -5px 0 #a87a3a88, inset -6px 0 #d6bb8c; }
  .lit { background: linear-gradient(90deg, #ddd0ba, #e6decd 75%, #cfbd9a); border-color: #fff; }
  .tray { margin-left: 131px; }
  .clock { margin-left: auto; width: 94px; display: flex; flex-direction: column; align-items: center; gap: 2px; color: #fff; font-size: 11.400px; line-height: 15px; padding-bottom: 1px; }
</style>
